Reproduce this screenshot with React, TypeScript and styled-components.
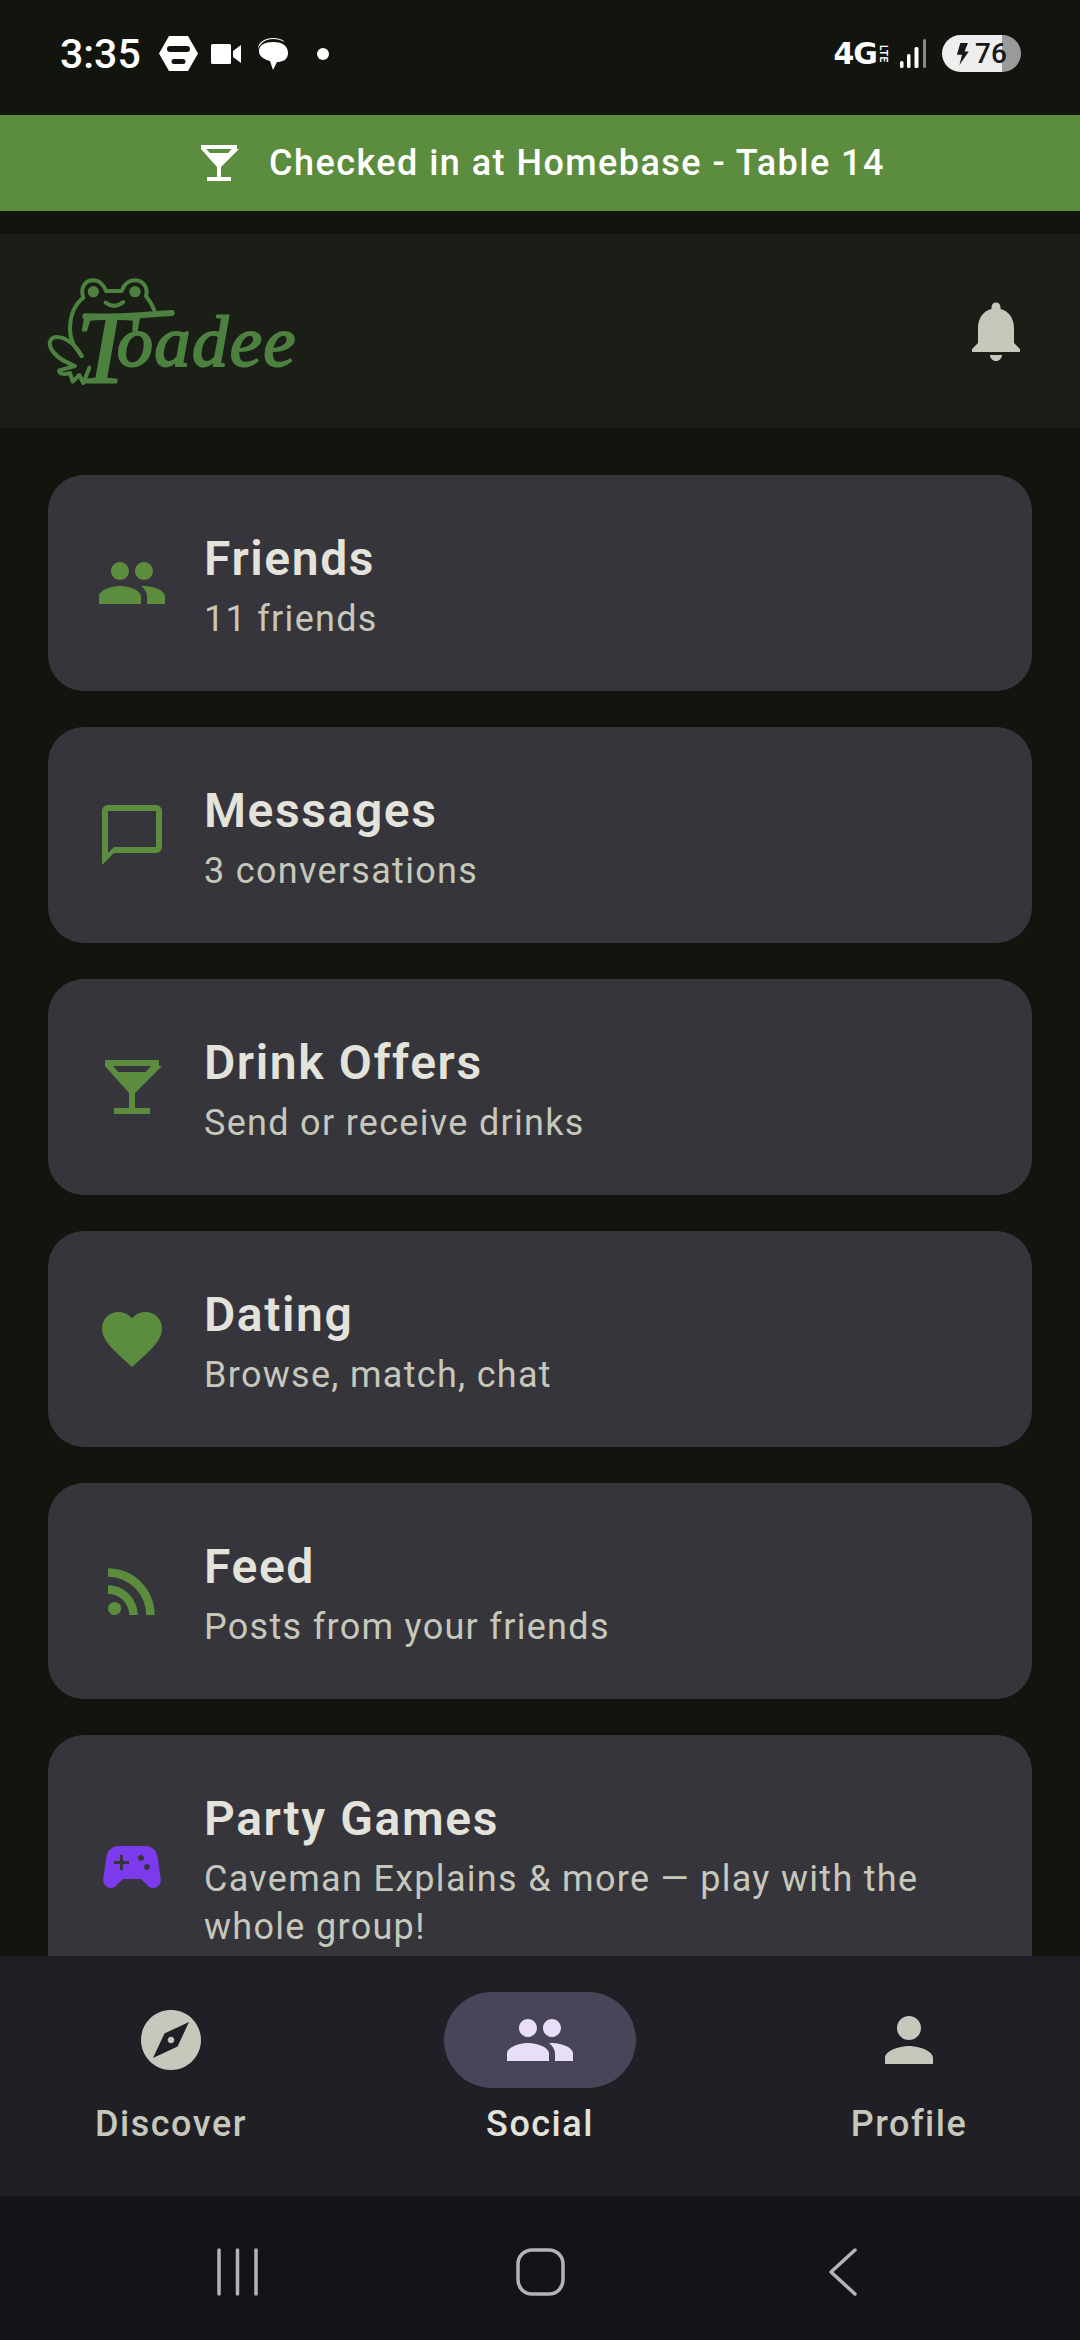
import styled, { createGlobalStyle } from "styled-components";

const GlobalStyle = createGlobalStyle`
  html, body { margin: 0; padding: 0; background: #12140e; }
  * { box-sizing: border-box; }
  body { font-family: Roboto, "Noto Sans", sans-serif; }
`;

const GREEN = "#5c8c3e";

const PATHS = {
  people:
    "M16 11c1.66 0 2.99-1.34 2.99-3S17.66 5 16 5c-1.66 0-3 1.34-3 3s1.34 3 3 3zm-8 0c1.66 0 2.99-1.34 2.99-3S9.66 5 8 5C6.34 5 5 6.34 5 8s1.34 3 3 3zm0 2c-2.33 0-7 1.17-7 3.5V19h14v-2.5c0-2.33-4.67-3.5-7-3.5zm8 0c-.29 0-.62.02-.97.05 1.16.84 1.97 1.97 1.97 3.45V19h6v-2.5c0-2.33-4.67-3.5-7-3.5z",
  chat: "M20 2H4c-1.1 0-2 .9-2 2v18l4-4h14c1.1 0 2-.9 2-2V4c0-1.1-.9-2-2-2zm0 14H6l-2 2V4h16v12z",
  bar: "M21 5V3H3v2l8 9v5H6v2h12v-2h-5v-5l9-9zM7.43 7L5.66 5h12.69l-1.78 2H7.43z",
  heart:
    "M12 21.35l-1.45-1.32C5.4 15.36 2 12.28 2 8.5 2 5.42 4.42 3 7.5 3c1.74 0 3.41.81 4.5 2.09C13.09 3.81 14.76 3 16.5 3 19.58 3 22 5.42 22 8.5c0 3.78-3.4 6.86-8.55 11.54L12 21.35z",
  rss: "M6.18 15.64a2.18 2.18 0 0 1 2.18 2.18C8.36 19 7.38 20 6.18 20 5 20 4 19 4 17.82a2.18 2.18 0 0 1 2.18-2.18M4 4.44A15.56 15.56 0 0 1 19.56 20h-2.83A12.73 12.73 0 0 0 4 7.27V4.44m0 5.66a9.9 9.9 0 0 1 9.9 9.9h-2.83A7.07 7.07 0 0 0 4 12.93V10.1z",
  gamepad:
    "M21.58 16.09l-1.09-7.66C20.21 6.46 18.52 5 16.53 5H7.47C5.48 5 3.79 6.46 3.51 8.43l-1.09 7.66C2.2 17.63 3.39 19 4.94 19c.68 0 1.32-.27 1.8-.75L9 16h6l2.25 2.25c.48.48 1.13.75 1.8.75 1.56 0 2.75-1.37 2.53-2.91zM11 11H9v2H8v-2H6v-1h2V8h1v2h2v1zm4-1c-.55 0-1-.45-1-1 0-.55.45-1 1-1s1 .45 1 1c0 .55-.45 1-1 1zm2 3c-.55 0-1-.45-1-1 0-.55.45-1 1-1s1 .45 1 1c0 .55-.45 1-1 1z",
  bell: "M12 22c1.1 0 2-.9 2-2h-4c0 1.1.89 2 2 2zm6-6v-5c0-3.07-1.64-5.64-4.5-6.32V4c0-.83-.67-1.5-1.5-1.5s-1.5.67-1.5 1.5v.68C7.63 5.36 6 7.92 6 11v5l-2 2v1h16v-1l-2-2z",
  explore:
    "M12 10.9c-.61 0-1.1.49-1.1 1.1s.49 1.1 1.1 1.1c.61 0 1.1-.49 1.1-1.1s-.49-1.1-1.1-1.1zM12 2C6.48 2 2 6.48 2 12s4.48 10 10 10 10-4.48 10-10S17.52 2 12 2zm2.19 12.19L6 18l3.81-8.19L18 6l-3.81 8.19z",
  person:
    "M12 12c2.21 0 4-1.79 4-4s-1.79-4-4-4-4 1.79-4 4 1.79 4 4 4zm0 2c-2.67 0-8 1.34-8 4v2h16v-2c0-2.66-5.33-4-8-4z",
};

type IconName = keyof typeof PATHS;

const Svg = styled.svg<{ $size: number; $color: string }>`
  width: ${(p) => p.$size}px;
  height: ${(p) => p.$size}px;
  flex: none;
  display: block;
  fill: ${(p) => p.$color};
`;

const Icon = ({ name, size = 72, color = GREEN }: { name: IconName; size?: number; color?: string }) => (
  <Svg viewBox="0 0 24 24" $size={size} $color={color}>
    <path d={PATHS[name]} />
  </Svg>
);

const Screen = styled.div`
  width: 1080px;
  height: 2340px;
  display: flex;
  flex-direction: column;
  overflow: hidden;
  background: #12140e;
`;

const StatusBar = styled.div`
  height: 115px;
  flex: none;
  padding: 0 59px 8px 60px;
  display: flex;
  align-items: center;
  justify-content: space-between;
`;

const StatusGroup = styled.div`
  display: flex;
  align-items: center;
`;

const Clock = styled.span`
  font-size: 41px;
  font-weight: 500;
  color: #fff;
  width: 99px;
`;

const StatusGlyph = styled.svg<{ $w: number; $h: number; $mr?: number }>`
  width: ${(p) => p.$w}px;
  height: ${(p) => p.$h}px;
  margin-right: ${(p) => p.$mr ?? 0}px;
  flex: none;
  display: block;
  fill: #fff;
`;

const NetworkLabel = styled.span`
  font-family: "DejaVu Sans", sans-serif;
  font-size: 30px;
  font-weight: 700;
  line-height: 31px;
  color: #fff;
  letter-spacing: -1px;
`;

const LteLabel = styled.span`
  writing-mode: vertical-rl;
  font-size: 10px;
  font-weight: 700;
  line-height: 10px;
  letter-spacing: 0.5px;
  color: #fff;
  margin: 0 12px 0 1px;
`;

const Battery = styled.div`
  width: 79px;
  height: 37px;
  margin-left: 15px;
  border-radius: 19px;
  display: flex;
  align-items: center;
  padding-left: 13px;
  gap: 6px;
  color: #17181a;
  background: linear-gradient(to right, #eeeeee 76%, #9a9a9a 76%);
  font-size: 28px;
  font-weight: 500;
`;

const Banner = styled.div`
  height: 96px;
  flex: none;
  background: ${GREEN};
  display: flex;
  align-items: center;
  justify-content: center;
  gap: 26px;
  color: #fff;
  font-size: 36px;
  font-weight: 500;
  letter-spacing: 1.45px;
`;

const Header = styled.header`
  height: 194px;
  flex: none;
  margin-top: 23px;
  padding: 0 48px 0 20px;
  display: flex;
  align-items: center;
  justify-content: space-between;
  background: #1b1d17;
`;

const LogoMark = styled.svg`
  width: 300px;
  height: 160px;
  display: block;
  fill: none;
  stroke: #4d8140;
  stroke-linecap: round;
  stroke-linejoin: round;
`;

const LogoWord = styled.text`
  font-family: "Liberation Serif", serif;
  font-style: italic;
  font-size: 218px;
  letter-spacing: 4px;
  fill: #4d8140;
  stroke-width: 6px;
`;

const LogoInitial = styled.tspan`
  font-size: 310px;
  letter-spacing: -50px;
`;

const CardList = styled.main`
  flex: 1;
  min-height: 0;
  overflow: hidden;
  padding: 47px 48px 0;
  display: flex;
  flex-direction: column;
  gap: 36px;
`;

const Card = styled.div`
  flex: none;
  padding: 48px;
  display: flex;
  align-items: center;
  gap: 36px;
  border-radius: 36px;
  background: #36353c;
`;

const CardText = styled.div`
  display: flex;
  flex-direction: column;
  min-width: 0;
`;

const CardTitle = styled.div`
  font-size: 48px;
  line-height: 72px;
  font-weight: 600;
  letter-spacing: 1.6px;
  color: #e3e3db;
`;

const CardSub = styled.div`
  font-size: 36px;
  line-height: 48px;
  letter-spacing: 1.3px;
  color: #c5c8ba;
`;

const BottomNav = styled.nav`
  height: 240px;
  flex: none;
  padding: 36px 75px 0;
  display: flex;
  justify-content: space-between;
  background: #201f26;
`;

const NavItem = styled.div<{ $active?: boolean }>`
  width: 192px;
  display: flex;
  flex-direction: column;
  align-items: center;
  font-size: 36px;
  line-height: 48px;
  font-weight: 500;
  letter-spacing: 1.5px;
  white-space: nowrap;
  color: ${(p) => (p.$active ? "#e3e3db" : "#c5c8ba")};
`;

const NavPill = styled.div<{ $active?: boolean }>`
  width: 192px;
  height: 96px;
  margin-bottom: 12px;
  border-radius: 48px;
  display: flex;
  align-items: center;
  justify-content: center;
  background: ${(p) => (p.$active ? "#494559" : "transparent")};
`;

const SystemNav = styled.div`
  height: 144px;
  flex: none;
  padding: 8px 223px 0 217px;
  display: flex;
  align-items: center;
  justify-content: space-between;
  background: #141418;
`;

const SystemGlyph = styled.svg<{ $w: number; $mr?: number }>`
  width: ${(p) => p.$w}px;
  height: 48px;
  margin-right: ${(p) => p.$mr ?? 0}px;
  display: block;
  fill: none;
  stroke: #b4b4b6;
  stroke-width: 3.5px;
  stroke-linecap: round;
  stroke-linejoin: round;
`;

const items: { icon: IconName; title: string; sub: string; color?: string }[] = [
  { icon: "people", title: "Friends", sub: "11 friends" },
  { icon: "chat", title: "Messages", sub: "3 conversations" },
  { icon: "bar", title: "Drink Offers", sub: "Send or receive drinks" },
  { icon: "heart", title: "Dating", sub: "Browse, match, chat" },
  { icon: "rss", title: "Feed", sub: "Posts from your friends" },
  {
    icon: "gamepad",
    title: "Party Games",
    sub: "Caveman Explains & more — play with the whole group!",
    color: "#7c3aed",
  },
];

const tabs: { icon: IconName; label: string; active?: boolean }[] = [
  { icon: "explore", label: "Discover" },
  { icon: "people", label: "Social", active: true },
  { icon: "person", label: "Profile" },
];

export default function App() {
  return (
    <Screen>
      <GlobalStyle />
      <StatusBar>
        <StatusGroup>
          <Clock>3:35</Clock>
          <StatusGlyph viewBox="0 0 39 35" $w={39} $h={35} $mr={13}>
            <path
              fillRule="evenodd"
              d="M10 0h19l10 17.5L29 35H10L0 17.5zM11 10a3 3 0 0 0 0 6h17a3 3 0 0 0 0-6zM15 23a2.500 2.500 0 0 0 0 5h9a2.500 2.500 0 0 0 0-5z"
            />
          </StatusGlyph>
          <StatusGlyph viewBox="0 0 30 20" $w={30} $h={20} $mr={16}>
            <path d="M1.500 0h17A1.500 1.500 0 0 1 20 1.500v17a1.500 1.500 0 0 1-1.500 1.500h-17A1.500 1.500 0 0 1 0 18.500v-17A1.500 1.500 0 0 1 1.500 0zM22 7l8-6v18l-8-6z" />
          </StatusGlyph>
          <StatusGlyph viewBox="0 0 31 32" $w={31} $h={32} $mr={29}>
            <path d="M16 4c8 0 15 3 15 11 0 7-6 9-11 9l-4 8-3-9C6 21 2 18 2 13 2 7 8 4 16 4z" />
            <path d="M1 11C1 4 8 0 16 0c5 0 9 1 12 4-4-2-8-3-12-3C9 1 3 5 1 11z" />
          </StatusGlyph>
          <StatusGlyph viewBox="0 0 12 12" $w={12} $h={12}>
            <circle cx="6" cy="6" r="6" />
          </StatusGlyph>
        </StatusGroup>
        <StatusGroup>
          <NetworkLabel>4G</NetworkLabel>
          <LteLabel>LTE</LteLabel>
          <StatusGlyph viewBox="0 0 27 29" $w={27} $h={29}>
            <rect x="0" y="22" width="3.500" height="7" rx="1.500" />
            <rect x="7" y="15" width="3.500" height="14" rx="1.500" />
            <rect x="14.500" y="8" width="4" height="21" rx="1.500" />
            <rect x="23" y="0" width="3" height="29" rx="1.500" fill="#8a8a8a" />
          </StatusGlyph>
          <Battery>
            <StatusGlyph viewBox="0 0 16 26" $w={14} $h={22}>
              <path fill="#17181a" d="M6 0h9l-4 10h5L5 26l3-12H2z" />
            </StatusGlyph>
            76
          </Battery>
        </StatusGroup>
      </StatusBar>

      <Banner>
        <Icon name="bar" size={48} color="#fff" />
        Checked in at Homebase - Table 14
      </Banner>

      <Header>
        <LogoMark viewBox="0 0 900 480">
          <g strokeWidth="12">
            <path d="M185 315C165 290 150 270 150 235C150 190 165 160 190 140C180 110 195 88 220 88C240 88 252 105 258 120L305 120C312 100 325 88 345 88C370 88 385 110 378 135C390 150 398 165 403 178" />
            <path d="M257 155Q283 175 310 153" />
            <path d="M185 315C170 285 140 258 110 258C92 258 85 275 92 290C105 320 140 335 165 345L118 358C115 368 130 372 150 366L158 392L178 372L190 396L208 350" />
          </g>
          <circle cx="220" cy="122" r="17" fill="#4d8140" stroke="none" />
          <circle cx="345" cy="122" r="17" fill="#4d8140" stroke="none" />
          <path d="M196 196C270 200 380 192 455 186" strokeWidth="18" />
          <LogoWord stroke="#4d8140">
            <LogoInitial x="168" y="396">
              T
            </LogoInitial>
            <tspan x="290" y="345">
              oadee
            </tspan>
          </LogoWord>
        </LogoMark>
        <Icon name="bell" color="#c5c8ba" />
      </Header>

      <CardList>
        {items.map((item) => (
          <Card key={item.title}>
            <Icon name={item.icon} color={item.color ?? GREEN} />
            <CardText>
              <CardTitle>{item.title}</CardTitle>
              <CardSub>{item.sub}</CardSub>
            </CardText>
          </Card>
        ))}
      </CardList>

      <BottomNav>
        {tabs.map((tab) => (
          <NavItem key={tab.label} $active={tab.active}>
            <NavPill $active={tab.active}>
              <Icon name={tab.icon} color={tab.active ? "#e8def8" : "#c5c8ba"} />
            </NavPill>
            {tab.label}
          </NavItem>
        ))}
      </BottomNav>

      <SystemNav>
        <SystemGlyph viewBox="0 0 41 48" $w={41}>
          <path d="M2 2V46M20.500 2V46M39 2V46" />
        </SystemGlyph>
        <SystemGlyph viewBox="0 0 49 48" $w={49} $mr={6}>
          <rect x="2" y="2" width="45" height="44" rx="14" />
        </SystemGlyph>
        <SystemGlyph viewBox="0 0 29 48" $w={29}>
          <path d="M27 2L3 24L27 46" />
        </SystemGlyph>
      </SystemNav>
    </Screen>
  );
}
